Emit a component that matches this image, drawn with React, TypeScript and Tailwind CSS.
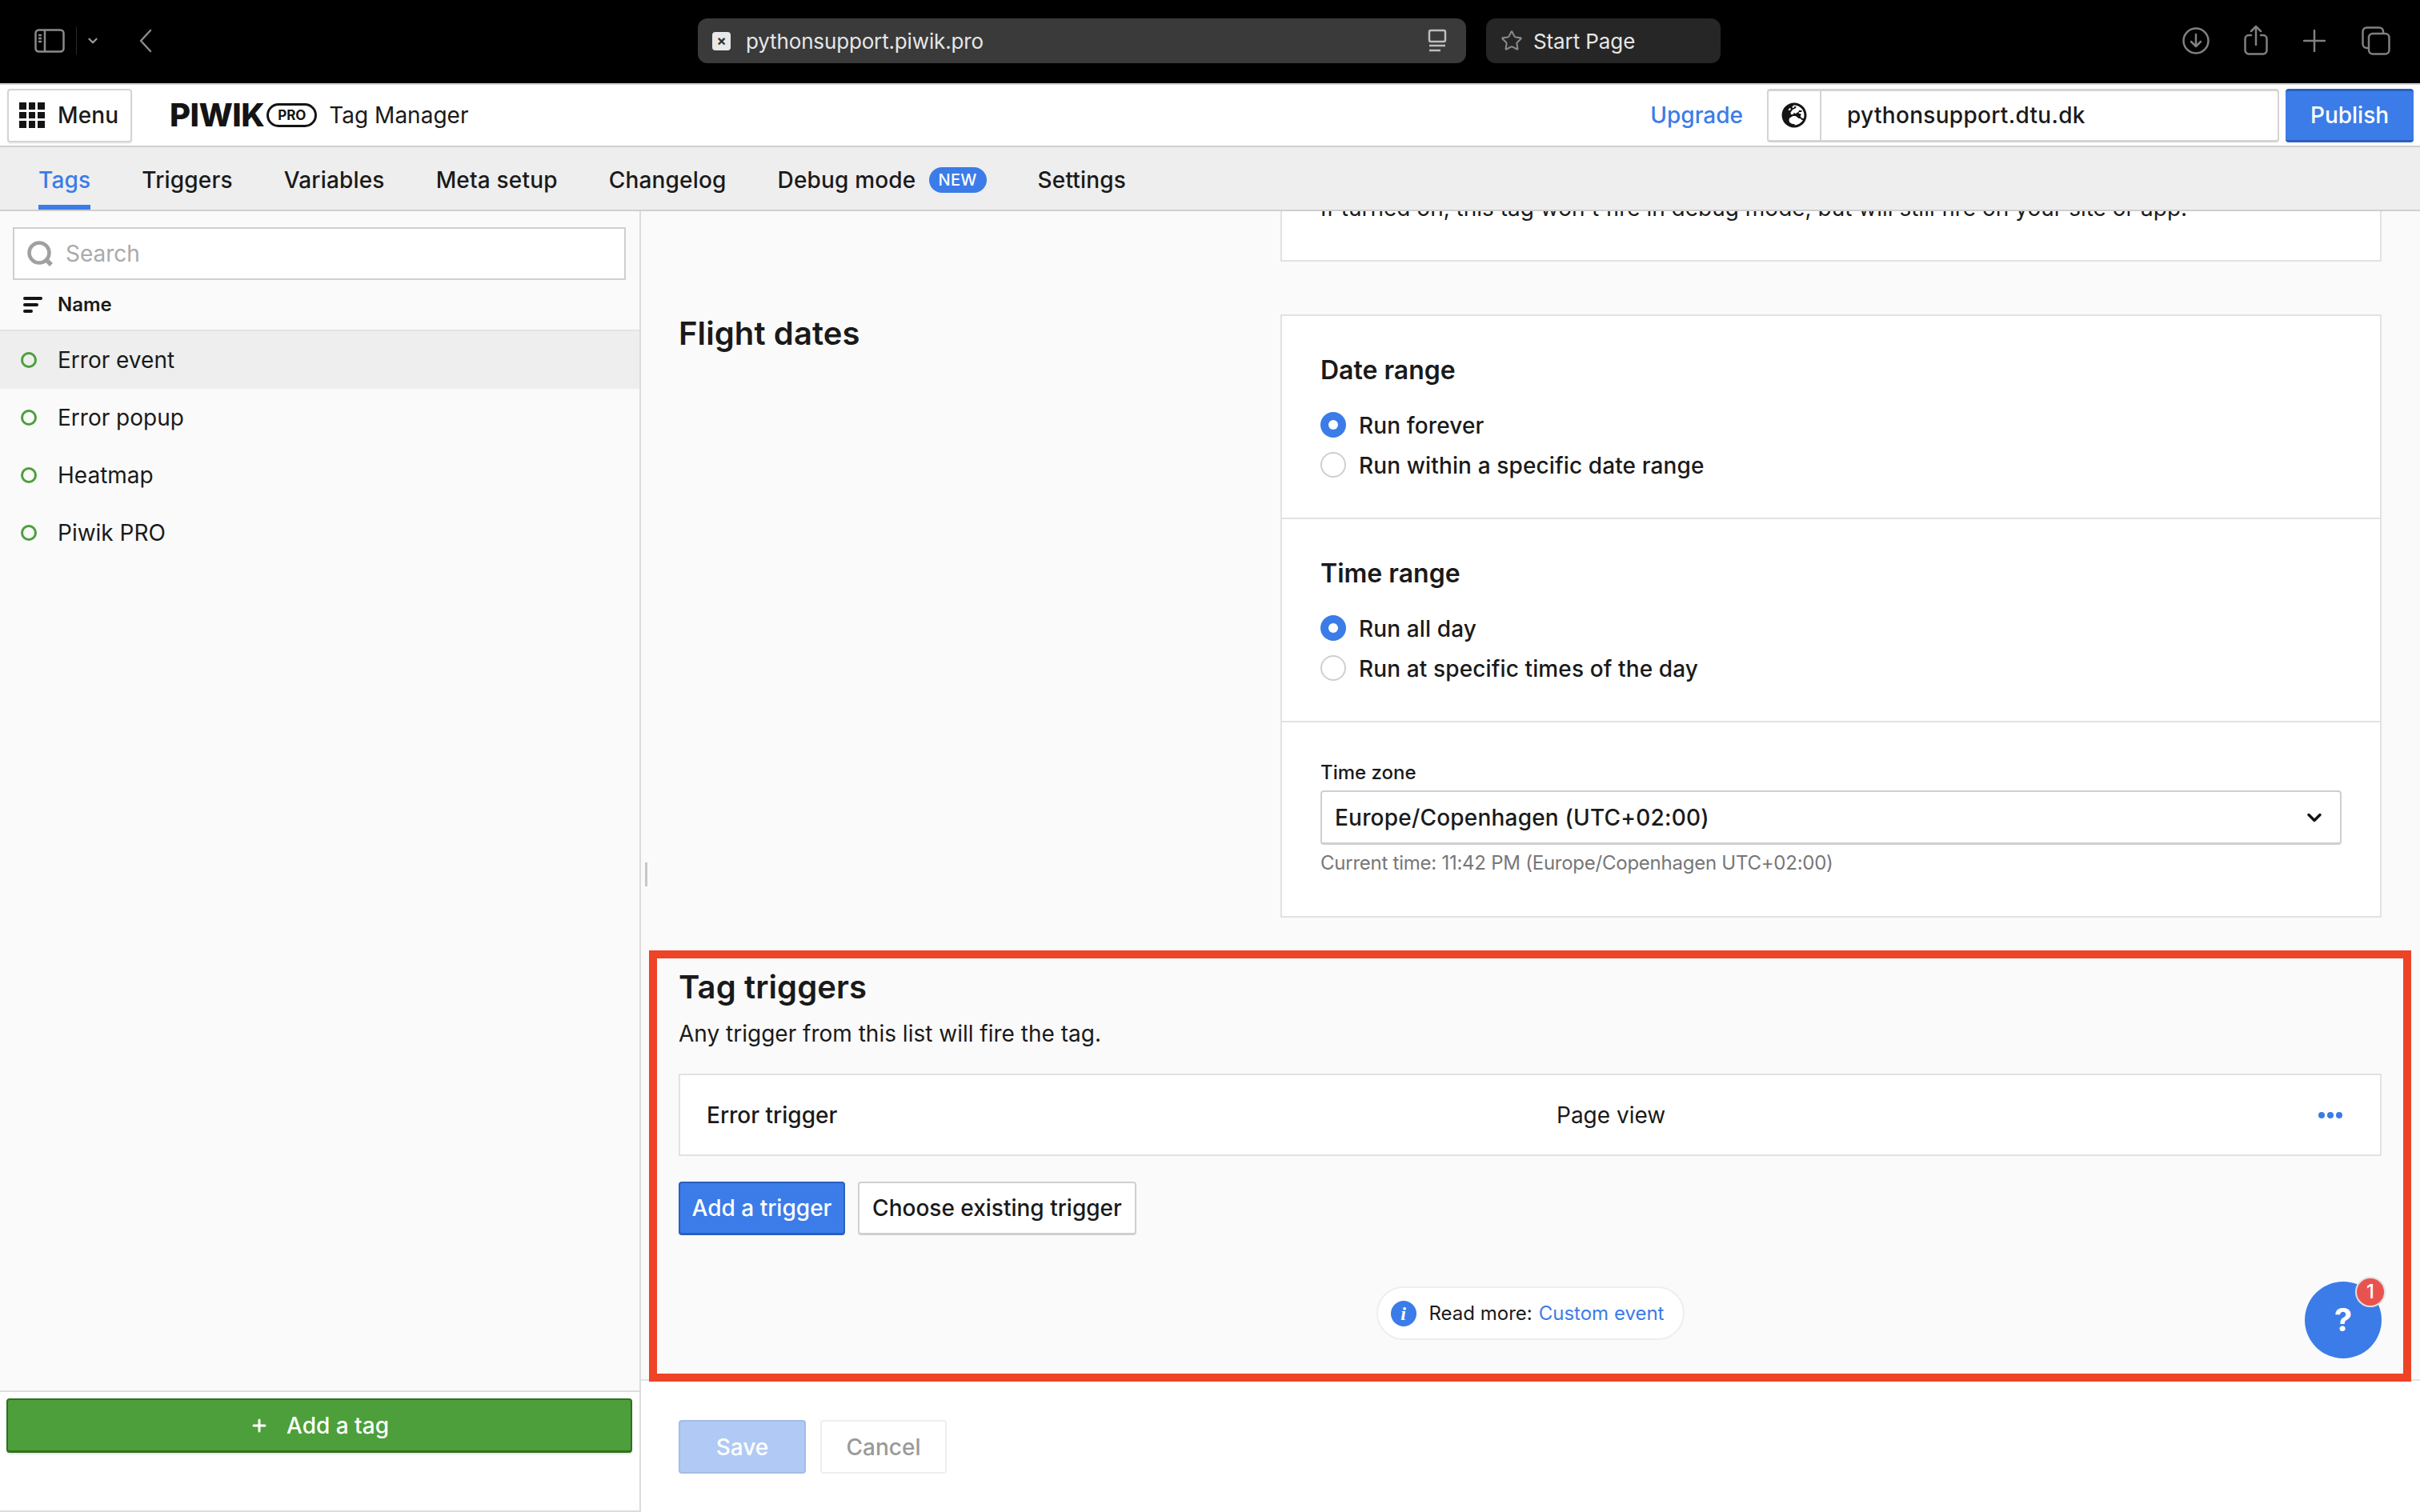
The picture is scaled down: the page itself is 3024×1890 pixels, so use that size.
import { ChevronDown, Plus, Star } from "lucide-react";
import { FaGlobeEurope } from "react-icons/fa";

function Radio({ on, label }: { on?: boolean; label: string }) {
  return (
    <div className="flex h-[50px] items-center gap-4">
      {on ? (
        <span className="flex h-8 w-8 items-center justify-center rounded-full bg-[#3b7ce8]">
          <span className="h-3 w-3 rounded-full bg-white" />
        </span>
      ) : (
        <span className="h-8 w-8 rounded-full border-2 border-[#cfcfcf] bg-white" />
      )}
      <span className="pt-[2px] text-[28px] font-medium leading-9 tracking-[0.12px] text-[#1a1a1a]">{label}</span>
    </div>
  );
}

function TagRow({ name, active }: { name: string; active?: boolean }) {
  return (
    <div className={`flex h-[72px] items-center pl-[26px] ${active ? "bg-[#eeeeee]" : ""}`}>
      <span className="h-5 w-5 rounded-full border-[3px] border-[#4c9f3a]" />
      <span className="ml-[26px] text-[28px] leading-9 text-[#1a1a1a]">{name}</span>
    </div>
  );
}

function RangeSection({ title, a, b }: { title: string; a: string; b: string }) {
  return (
    <div className="h-[254px] border-b-2 border-[#e2e2e2] px-12 pt-11">
      <h3 className="text-[32px] font-semibold leading-[48px] text-[#1a1a1a]">{title}</h3>
      <div className="mt-[19px]">
        <Radio on label={a} />
        <Radio label={b} />
      </div>
    </div>
  );
}

export default function App() {
  return (
    <div className="relative flex h-[1890px] w-[3024px] flex-col overflow-hidden bg-white [font-family:Inter,sans-serif]">
      {/* Browser chrome */}
      <div className="relative flex h-[106px] shrink-0 items-center border-b-2 border-[#d0d0d0] bg-black pb-[2px]">
        <div className="flex w-[872px] items-center pl-[43px]">
          <svg width="38" height="30" viewBox="0 0 38 30" fill="none" stroke="#8a8a8a" strokeWidth="2.5">
            <rect x="1.5" y="1.5" width="35" height="27" rx="4" />
            <path d="M13 2v26M5 8h4M5 12h4M5 16h4" />
          </svg>
          <span className="ml-[14px] h-[34px] w-px bg-[#2a2a2a]" />
          <ChevronDown className="ml-[11px] h-[18px] w-[18px] text-[#9a9a9a]" strokeWidth={3} />
          <svg className="ml-[48px]" width="18" height="30" viewBox="0 0 18 30" fill="none" stroke="#8a8a8a" strokeWidth="2.5" strokeLinecap="round" strokeLinejoin="round">
            <path d="M15 2L3 15l12 13" />
          </svg>
        </div>
        <div className="flex h-14 w-[960px] items-center rounded-xl bg-[#3a3a3a] pl-[18px] pr-6">
          <span className="flex h-[23px] w-[23px] items-center justify-center rounded bg-[#e8e8e8] text-[18px] font-bold leading-none text-[#333]">×</span>
          <span className="ml-[19px] flex-1 pt-[2px] text-[26px] leading-8 tracking-[-0.15px] text-[#e6e6e6]">pythonsupport.piwik.pro</span>
          <svg width="24" height="30" viewBox="0 0 24 30" fill="none" stroke="#bdbdbd" strokeWidth="2.5">
            <rect x="2" y="2" width="20" height="14" rx="2" />
            <path d="M2 21h20M2 27h14" />
          </svg>
        </div>
        <div className="ml-[25px] flex h-14 w-[293px] items-center rounded-xl bg-[#262626] pl-[18px]">
          <Star className="h-[28px] w-[28px] text-[#8a8a8a]" strokeWidth={1.75} />
          <span className="ml-[13px] pt-[2px] text-[26px] leading-8 tracking-[-0.1px] text-[#e6e6e6]">Start Page</span>
        </div>
        <div className="ml-[577px] flex items-center text-[#808080]">
          <svg width="34" height="34" viewBox="0 0 34 34" fill="none" stroke="currentColor" strokeWidth="2.5" strokeLinecap="round" strokeLinejoin="round">
            <circle cx="17" cy="17" r="15.5" />
            <path d="M17 9v15M11 18l6 6 6-6" />
          </svg>
          <svg className="-mt-[2px] ml-[43px]" width="30" height="38" viewBox="0 0 30 38" fill="none" stroke="currentColor" strokeWidth="2.5" strokeLinecap="round" strokeLinejoin="round">
            <path d="M9 13H6a4.500 4.500 0 0 0-4.500 4.500V32A4.500 4.500 0 0 0 6 36.500h18a4.500 4.500 0 0 0 4.500-4.500V17.500A4.500 4.500 0 0 0 24 13h-3M15 25V2M9 8l6-6 6 6" />
          </svg>
          <svg className="ml-[44px]" width="28" height="28" viewBox="0 0 28 28" fill="none" stroke="currentColor" strokeWidth="2.5" strokeLinecap="round">
            <path d="M14 1v26M1 14h26" />
          </svg>
          <svg className="ml-[45px]" width="36" height="36" viewBox="0 0 36 36" fill="none" stroke="currentColor" strokeWidth="2.5" strokeLinejoin="round">
            <rect x="9" y="9" width="25.500" height="25.500" rx="5" />
            <path d="M9 27H6.500a5 5 0 0 1-5-5V6.500a5 5 0 0 1 5-5H22a5 5 0 0 1 5 4.500V9" />
          </svg>
        </div>
      </div>

      {/* App header */}
      <div className="flex h-[78px] shrink-0 items-center border-b-2 border-[#cfcfcf] bg-white pl-[9px] pr-2">
        <div className="flex h-[67px] w-[156px] items-center rounded-sm border-2 border-[#d4d4d4] bg-white pl-[13px] shadow-[0_2px_2px_rgba(0,0,0,0.08)]">
          <span className="grid h-8 w-8 grid-cols-3 gap-[3px]">
            {[0, 1, 2, 3, 4, 5, 6, 7, 8].map((i) => (
              <span key={i} className="bg-[#141414]" />
            ))}
          </span>
          <span className="ml-[16px] text-[28px] font-medium leading-9 tracking-[0.1px] text-[#1a1a1a]">Menu</span>
        </div>
        <span className="ml-[47px] text-[40px] font-extrabold leading-none tracking-[-0.5px] text-[#141414]">PIWIK</span>
        <span className="ml-[3px] flex h-[30px] w-[63px] items-center justify-center rounded-[15px] border-[3px] border-[#141414] text-[17px] font-bold leading-none text-[#141414]">PRO</span>
        <span className="ml-[15px] text-[28px] leading-9 text-[#1a1a1a]">Tag Manager</span>
        <span className="ml-auto text-[28px] font-medium leading-9 text-[#3b7ce8]">Upgrade</span>
        <div className="ml-[30px] flex h-[67px] w-[640px] items-stretch rounded-sm border-2 border-t-[3px] border-b-[3px] border-[#d4d4d4] bg-white">
          <span className="flex w-[66px] items-center justify-center border-r-2 border-[#d4d4d4]">
            <FaGlobeEurope className="h-[32px] w-[32px] text-[#141414]" />
          </span>
          <span className="ml-8 self-center text-[28px] font-medium leading-9 tracking-[0.3px] text-[#1a1a1a]">pythonsupport.dtu.dk</span>
        </div>
        <div className="ml-2 flex h-[67px] w-[160px] items-center justify-center rounded-sm border-y-[3px] border-[#2a5fc0] bg-[#3b7ce8] text-[28px] font-medium text-white">Publish</div>
      </div>

      {/* Tabs */}
      <div className="flex h-[80px] shrink-0 items-stretch gap-16 border-b-2 border-[#cfcfcf] bg-[#eeeeee] pl-12 pt-[3px] text-[28px] font-medium leading-9 tracking-[0.18px] text-[#1a1a1a]">
        <span className="flex items-center border-b-[6px] border-[#3b7ce8] pt-[6px] text-[#3b7ce8]">Tags</span>
        <span className="flex items-center">Triggers</span>
        <span className="flex items-center">Variables</span>
        <span className="flex items-center">Meta setup</span>
        <span className="flex items-center">Changelog</span>
        <span className="flex items-center gap-4">
          Debug mode
          <span className="flex h-8 w-[72px] items-center justify-center rounded-full bg-[#3b7ce8] text-[20px] font-medium leading-none text-white">NEW</span>
        </span>
        <span className="flex items-center">Settings</span>
      </div>

      <div className="flex min-h-0 flex-1">
        {/* Sidebar */}
        <aside className="flex w-[801px] shrink-0 flex-col border-r-2 border-[#dcdcdc]">
          <div className="flex min-h-0 flex-1 flex-col bg-[#fafafa]">
            <div className="ml-4 mr-[17px] mt-5 flex h-[66px] items-center border-2 border-[#cfcfcf] bg-white pl-4">
              <svg width="32" height="32" viewBox="0 0 32 32" fill="none" stroke="#a0a0a0" strokeWidth="4.500">
                <circle cx="15" cy="15" r="12.500" />
                <path d="M23 23l7 7" strokeWidth="5.500" />
              </svg>
              <span className="ml-4 text-[28px] leading-9 text-[#aaaaaa]">Search</span>
            </div>
            <div className="flex h-[64px] items-center border-b-2 border-[#e4e4e4] pl-[29px]">
              <svg width="24" height="20" viewBox="0 0 24 20" fill="#141414">
                <rect width="24" height="4" rx="2" />
                <rect y="8" width="19" height="4" rx="2" />
                <rect y="16" width="12" height="4" rx="2" />
              </svg>
              <span className="ml-[19px] text-[24px] font-semibold leading-8 text-[#1a1a1a]">Name</span>
            </div>
            <TagRow name="Error event" active />
            <TagRow name="Error popup" />
            <TagRow name="Heatmap" />
            <TagRow name="Piwik PRO" />
          </div>
          <div className="h-[152px] shrink-0 border-y-2 border-[#dcdcdc] bg-white pl-2 pr-[9px] pt-2">
            <div className="flex h-[68px] items-center justify-center gap-[22px] rounded-sm border-2 border-b-[3px] border-[#33701f] bg-[#4c9f3a] text-[28px] font-medium text-white shadow-[0_2px_2px_rgba(0,0,0,0.1)]">
              <Plus className="h-6 w-6" strokeWidth={3} />
              Add a tag
            </div>
          </div>
        </aside>

        {/* Main */}
        <main className="flex min-w-0 flex-1 flex-col">
          <div className="h-[1462px] shrink-0 overflow-hidden border-b-2 border-[#e2e2e2] bg-[#fafafa] pl-[47px] pr-[48px]">
            <div className="-mt-[22px] ml-[752px] h-[85px] border-2 border-t-0 border-[#e2e2e2] bg-white px-12 text-[28px] leading-9 text-[#1a1a1a]">
              If turned on, this tag won't fire in debug mode, but will still fire on your site or app.
            </div>
            <div className="mt-[66px] flex">
              <h2 className="w-[752px] shrink-0 text-[40px] font-semibold leading-[48px] tracking-[0.1px] text-[#1a1a1a]">Flight dates</h2>
              <div className="flex-1 border-2 border-[#e2e2e2] bg-white">
                <RangeSection title="Date range" a="Run forever" b="Run within a specific date range" />
                <RangeSection title="Time range" a="Run all day" b="Run at specific times of the day" />
                <div className="h-[242px] px-12 pt-[47px]">
                  <div className="text-[24px] font-medium leading-8 text-[#1a1a1a]">Time zone</div>
                  <div className="mt-[6px] flex h-[68px] items-center justify-between rounded-sm border-2 border-b-[3px] border-[#cfcfcf] bg-white pl-4 pr-[18px] text-[28px] font-medium tracking-[0.2px] text-[#1a1a1a]">
                    Europe/Copenhagen (UTC+02:00)
                    <ChevronDown className="h-7 w-7 text-[#141414]" strokeWidth={3} />
                  </div>
                  <div className="mt-[7px] text-[24px] leading-8 tracking-[-0.25px] text-[#777777]">Current time: 11:42 PM (Europe/Copenhagen UTC+02:00)</div>
                </div>
              </div>
            </div>

            <h2 className="mt-[61px] text-[40px] font-semibold leading-[52px] tracking-[0.1px] text-[#1a1a1a]">Tag triggers</h2>
            <p className="mt-[14px] text-[28px] leading-9 text-[#1a1a1a]">Any trigger from this list will fire the tag.</p>
            <div className="mt-8 flex h-[103px] items-center border-2 border-[#e2e2e2] bg-white pl-[33px] pr-[47px] text-[28px] text-[#1a1a1a]">
              <span className="w-[1062px] font-medium">Error trigger</span>
              <span className="flex-1">Page view</span>
              <span className="flex gap-[3px]">
                <span className="h-2 w-2 rounded-full bg-[#3b7ce8]" />
                <span className="h-2 w-2 rounded-full bg-[#3b7ce8]" />
                <span className="h-2 w-2 rounded-full bg-[#3b7ce8]" />
              </span>
            </div>
            <div className="mt-8 flex gap-4">
              <div className="flex h-[67px] w-[208px] items-center justify-center rounded-sm border-2 border-b-[3px] border-[#2a5fc0] bg-[#3b7ce8] text-[28px] font-medium text-white">Add a trigger</div>
              <div className="flex h-[67px] w-[348px] items-center justify-center rounded-sm border-2 border-b-[3px] border-[#d0d0d0] bg-white text-[28px] font-medium text-[#1a1a1a]">Choose existing trigger</div>
            </div>
            <div className="mt-16 flex justify-center">
              <div className="flex h-[67px] w-[385px] items-center rounded-[34px] border-2 border-[#eeeeee] bg-white pl-4 text-[24px] text-[#1a1a1a]">
                <span className="flex h-8 w-8 items-center justify-center rounded-full bg-[#3b7ce8] text-[24px] font-bold italic leading-none text-white [font-family:'Liberation_Serif',serif]">i</span>
                <span className="ml-4">Read more:</span>
                <span className="ml-[8px] text-[#3b7ce8]">Custom event</span>
              </div>
            </div>
          </div>
          <div className="flex flex-1 gap-[18px] pl-[47px] pt-[49px]">
            <div className="flex h-[67px] w-[159px] items-center justify-center rounded-sm border-2 border-[#a4bce4] bg-[#b0caf5] text-[28px] font-medium text-white">Save</div>
            <div className="flex h-[67px] w-[158px] items-center justify-center rounded-sm border-2 border-[#eeeeee] bg-white text-[28px] font-medium text-[#9a9a9a]">Cancel</div>
          </div>
        </main>
      </div>

      {/* Overlays */}
      <div className="absolute left-[806px] top-[1078px] h-[30px] w-[3px] bg-[#c8c8c8]" />
      <div className="absolute left-[811px] top-[1188px] h-[539px] w-[2202px] border-[10px] border-[#ee4327]" />
      <div className="absolute left-[2880px] top-[1602px] flex h-[96px] w-[96px] items-center justify-center rounded-full bg-[#3b7ce8] text-[40px] font-bold text-white">?</div>
      <div className="absolute left-[2943px] top-[1596px] flex h-[38px] w-[38px] items-center justify-center rounded-full border-2 border-[#e0e0e0] bg-[#e9534f] text-[24px] font-medium text-white">1</div>
    </div>
  );
}
